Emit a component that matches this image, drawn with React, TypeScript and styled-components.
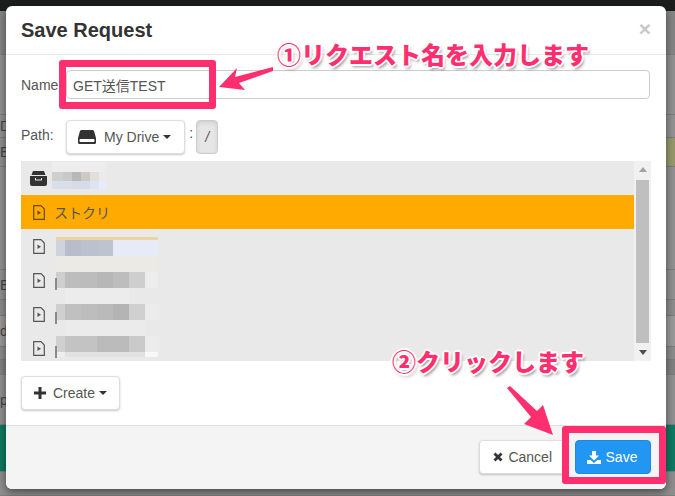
import React from "react";
import styled, { createGlobalStyle } from "styled-components";

const SANS = `"Liberation Sans", "Noto Sans CJK JP", sans-serif`;

const mosaic: { y: number; h: number; cells: [number, number, string][] }[] = [
  { y: 162, h: 10, cells: [[52, 54, "#ededed"]] },
  {
    y: 172,
    h: 9,
    cells: [
      [52, 11, "#cfcfcf"],
      [63, 9, "#c9c9c9"],
      [72, 9, "#b9b8b6"],
      [81, 9, "#cbcac8"],
      [90, 9, "#e0dfdc"],
      [99, 7, "#ecebe8"],
    ],
  },
  {
    y: 181,
    h: 8,
    cells: [
      [52, 20, "#d8deea"],
      [72, 18, "#d5dbe9"],
      [90, 9, "#dde4f3"],
      [99, 7, "#e6ecfb"],
    ],
  },
  { y: 237, h: 3, cells: [[56, 102, "#eed3a3"]] },
  {
    y: 240,
    h: 16,
    cells: [
      [56, 9, "#cfd3dd"],
      [65, 16, "#b9bdcb"],
      [81, 16, "#bcc1ce"],
      [97, 16, "#bec3d0"],
      [113, 45, "#e7ebf7"],
    ],
  },
  { y: 256, h: 16, cells: [[56, 102, "#ebeae5"]] },
  {
    y: 272,
    h: 16,
    cells: [
      [56, 9, "#cecece"],
      [65, 16, "#bdbdbd"],
      [81, 16, "#bcbcbc"],
      [97, 16, "#b7b7b7"],
      [113, 16, "#bdbdbd"],
      [129, 16, "#cecece"],
      [145, 13, "#ededed"],
    ],
  },
  { y: 288, h: 16, cells: [[65, 64, "#ececec"]] },
  {
    y: 304,
    h: 16,
    cells: [
      [56, 9, "#cfcfcf"],
      [65, 16, "#c0c0c0"],
      [81, 16, "#bdbdbd"],
      [97, 16, "#bababa"],
      [113, 16, "#b4b4b4"],
      [129, 16, "#d0d0d0"],
      [145, 13, "#ececec"],
    ],
  },
  { y: 320, h: 16, cells: [[65, 80, "#ebebeb"]] },
  {
    y: 336,
    h: 16,
    cells: [
      [56, 9, "#d0d0d0"],
      [65, 16, "#c3c3c3"],
      [81, 16, "#c3c3c3"],
      [97, 32, "#bbbbbb"],
      [129, 16, "#cacaca"],
      [145, 13, "#ececec"],
    ],
  },
  {
    y: 352,
    h: 5,
    cells: [
      [56, 9, "#eeeeee"],
      [65, 80, "#e2e2e2"],
      [145, 13, "#f8f8f8"],
    ],
  },
];

const files = ["ストクリ", "", "", "", ""];

const FileIcon = ({ color = "#555" }: { color?: string }) => (
  <svg width="12" height="15" viewBox="0 0 12 15">
    <path d="M.7.7H8L11.3 4V14.3H.7Z" fill="none" stroke={color} strokeWidth="1.2" />
    <path d="M4.5 5.5 8 7.8 4.5 10Z" fill={color} />
  </svg>
);

const App = () => (
  <>
    <GlobalStyle />
    <Page>
      <TopBar />
      <PageRow $h={44} $bg="#858585" />
      <PageRow $h={60} $bg="#919191" />
      <PageRow $h={23} $bg="#929292">
        <Fragment>D</Fragment>
      </PageRow>
      <PageRow $h={29} $bg="#8f8f8f" $right="#97996b">
        <Fragment>E</Fragment>
      </PageRow>
      <PageRow $h={103} $bg="#919191" />
      <PageRow $h={30} $bg="#919191">
        <Fragment>E</Fragment>
      </PageRow>
      <PageRow $h={16} $bg="#8c8c8c" />
      <PageRow $h={31} $bg="#9a9a9a">
        <Fragment>d</Fragment>
      </PageRow>
      <PageRow $h={13} $bg="#8c8c8c" />
      <PageRow $h={15} $bg="#828282" />
      <PageRow $h={50} $bg="#919191">
        <Fragment>p</Fragment>
      </PageRow>
      <PageRow $h={47} $bg="#0e7a63" />
      <PageRow $h={24} $bg="#8e8e8e" />
    </Page>

    <Modal>
      <Header>
        <Title>Save Request</Title>
        <Close>×</Close>
      </Header>
      <Body>
        <FieldRow>
          <Label>Name:</Label>
          <NameInput readOnly value="GET送信TEST" />
        </FieldRow>
        <PathRow>
          <Label>Path:</Label>
          <Button $pad="0 13px 0 11px">
            <svg width="18" height="14" viewBox="0 0 18 14">
              <path
                d="M3.5 0H14.5Q15.5 0 16 1L18 8V12.5Q18 14 16.5 14H1.5Q0 14 0 12.5V8L2 1Q2.5 0 3.5 0Z"
                fill="#333"
              />
              <rect x="1.5" y="9" width="15" height="3" rx="1" fill="#fff" />
            </svg>
            <ButtonText $left="8px">My Drive</ButtonText>
            <Caret />
          </Button>
          <Colon>:</Colon>
          <Crumb>/</Crumb>
        </PathRow>
        <ListBox>
          <Rows>
            <Row>
              <ArchiveIcon width="17" height="15" viewBox="0 0 17 15">
                <path d="M3 0H14L15.5 4H1.5Z" fill="#333" />
                <path
                  d="M0 5H17V13Q17 15 15 15H2Q0 15 0 13ZM5 7V9.5H12V7H11V8.5H6V7Z"
                  fill="#333"
                  fillRule="evenodd"
                />
              </ArchiveIcon>
            </Row>
            {files.map((name, i) => (
              <Row key={i} $active={name !== ""}>
                <FileIcon color={name ? "#6b4a00" : "#555"} />
                <RowName>{name}</RowName>
              </Row>
            ))}
          </Rows>
          <Scrollbar>
            <ScrollUp />
            <Thumb />
            <ScrollDown />
          </Scrollbar>
          <Mosaic viewBox="0 161 160 200" width="160" height="200" shapeRendering="crispEdges">
            {mosaic.flatMap((m) =>
              m.cells.map(([x, w, fill]) => (
                <rect key={`${m.y}-${x}`} x={x - 21} y={m.y} width={w} height={m.h} fill={fill} />
              )),
            )}
            {[278, 312, 346].map((y) => (
              <rect key={y} x={34} y={y} width={1.5} height={12} fill="#8a8a8a" />
            ))}
          </Mosaic>
        </ListBox>
        <CreateRow>
          <Button $pad="0 12px 0 12px">
            <svg width="12" height="12" viewBox="0 0 12 12">
              <path d="M4.5 0H7.500V4.5H12V7.5H7.5V12H4.5V7.5H0V4.5H4.5Z" fill="#333" />
            </svg>
            <ButtonText $left="7px">Create</ButtonText>
            <Caret />
          </Button>
        </CreateRow>
      </Body>
      <Footer>
        <Button $pad="0 12px 0 13px">
          <svg width="10" height="10" viewBox="0 0 10 10">
            <path d="M1.5 1.5 8.5 8.5M8.5 1.5 1.5 8.5" stroke="#333" strokeWidth="2.8" />
          </svg>
          <ButtonText $left="5px">Cancel</ButtonText>
        </Button>
        <SaveButton>
          <svg width="14" height="13" viewBox="0 0 14 13">
            <path d="M5 0H9V4.5H12L7 9.5 2 4.5H5Z" fill="#fff" />
            <path d="M0 9H3.5L7 12 10.500 9H14V13H0Z" fill="#fff" />
          </svg>
          <ButtonText $left="5px">Save</ButtonText>
        </SaveButton>
      </Footer>
    </Modal>

    <NameHighlight />
    <SaveHighlight />
    <NameNote>①リクエスト名を入力します</NameNote>
    <SaveNote>②クリックします</SaveNote>
    <Arrows viewBox="0 0 675 496" width="675" height="496">
      <g fill="#ff2f6f">
        <path d="M219 87 237 68 235 77 273 67 273 71 239 83 245 90Z" />
        <path d="M507 388 510 386 537 411 543 405 553 435 524 424 531 417Z" />
      </g>
    </Arrows>
  </>
);

export default App;

const GlobalStyle = createGlobalStyle`
  html, body {
    margin: 0;
    padding: 0;
    overflow: hidden;
    background: #8f8f8f;
  }
  * {
    box-sizing: border-box;
  }
`;

const Page = styled.div`
  display: flex;
  flex-direction: column;
  width: 675px;
  height: 496px;
  overflow: hidden;
  font-family: ${SANS};
`;

const TopBar = styled.div`
  flex: none;
  height: 11px;
  background-color: #1c1e1d;
`;

const PageRow = styled.div<{ $h: number; $bg: string; $right?: string }>`
  display: flex;
  align-items: center;
  flex: none;
  height: ${(p) => p.$h}px;
  background: ${(p) =>
    p.$right ? `linear-gradient(90deg, ${p.$bg} 600px, ${p.$right} 600px)` : p.$bg};
  border-bottom: 1px solid #7d7d7d;
`;

const Fragment = styled.span`
  font-size: 14px;
  color: #444;
`;

const Modal = styled.div`
  position: absolute;
  left: 6px;
  top: 6px;
  display: flex;
  flex-direction: column;
  width: 660px;
  height: 483px;
  background-color: #fff;
  border-radius: 6px;
  box-shadow: 0 3px 9px rgba(0, 0, 0, 0.5);
  overflow: hidden;
  font-family: ${SANS};
  font-size: 14px;
  color: #555;
`;

const Header = styled.div`
  display: flex;
  justify-content: space-between;
  align-items: center;
  height: 49px;
  padding: 0 15px;
  border-bottom: 1px solid #e9e9e9;
`;

const Title = styled.h4`
  margin: 0;
  padding-top: 1px;
  font-size: 20px;
  font-weight: 700;
  color: #333;
`;

const Close = styled.span`
  margin-top: -2px;
  font-size: 21px;
  font-weight: 700;
  color: #c8c8c8;
`;

const Body = styled.div`
  display: flex;
  flex-direction: column;
  flex: 1;
  padding: 15px;
`;

const FieldRow = styled.div`
  display: flex;
  align-items: center;
  height: 29px;
`;

const Label = styled.label`
  width: 45px;
  flex: none;
`;

const NameInput = styled.input`
  flex: 1;
  height: 29px;
  margin-right: 1px;
  padding: 0 6px;
  border: 1px solid #ccc;
  border-radius: 4px;
  outline: none;
  font-family: inherit;
  font-size: 14px;
  color: #555;
`;

const PathRow = styled.div`
  display: flex;
  align-items: flex-start;
  height: 34px;
  margin-top: 21px;

  ${Label} {
    margin-top: 7px;
  }
`;

const Button = styled.button<{ $pad: string }>`
  display: inline-flex;
  align-items: center;
  height: 34px;
  padding: ${(p) => p.$pad};
  background-color: #fff;
  border: 1px solid #ddd;
  border-radius: 4px;
  box-shadow: 0 1px 2px rgba(0, 0, 0, 0.22);
  font-family: inherit;
  font-size: 14px;
  color: #555;
`;

const ButtonText = styled.span<{ $left: string }>`
  margin-left: ${(p) => p.$left};
`;

const Caret = styled.span`
  margin-left: 4px;
  border-top: 4px solid #333;
  border-left: 4px solid transparent;
  border-right: 4px solid transparent;
`;

const Colon = styled.span`
  margin: 5px 0 0 4px;
  width: 7px;
`;

const Crumb = styled.span`
  display: flex;
  align-items: center;
  justify-content: center;
  width: 22px;
  height: 34px;
  background-color: #e6e6e6;
  border: 1px solid #ccc;
  border-radius: 4px;
  box-shadow: inset 0 2px 4px rgba(0, 0, 0, 0.1);
  font-style: italic;
`;

const ListBox = styled.div`
  position: relative;
  display: flex;
  height: 200px;
  margin-top: 7px;
  background-color: #e9e9e9;
  overflow: hidden;
`;

const Rows = styled.div`
  display: flex;
  flex-direction: column;
  width: 613px;
`;

const Row = styled.div<{ $active?: boolean }>`
  display: flex;
  align-items: center;
  flex: none;
  gap: 9px;
  height: 34px;
  padding-left: 12px;
  background-color: ${(p) => (p.$active ? "#ffaa00" : "transparent")};
  color: #555;
`;

const ArchiveIcon = styled.svg`
  margin-left: -3px;
`;

const RowName = styled.span`
  font-size: 14px;
`;

const Scrollbar = styled.div`
  display: flex;
  flex-direction: column;
  align-items: center;
  justify-content: space-between;
  width: 17px;
  background-color: #f1f1f1;
`;

const ScrollUp = styled.span`
  margin-top: 6px;
  border-bottom: 5px solid #a3a3a3;
  border-left: 4px solid transparent;
  border-right: 4px solid transparent;
`;

const ScrollDown = styled.span`
  margin-bottom: 6px;
  border-top: 5px solid #505050;
  border-left: 4px solid transparent;
  border-right: 4px solid transparent;
`;

const Thumb = styled.div`
  width: 13px;
  height: 163px;
  background-color: #bfbfbf;
`;

const Mosaic = styled.svg`
  position: absolute;
  left: 0;
  top: 0;
`;

const CreateRow = styled.div`
  display: flex;
  margin-top: 15px;
`;

const Footer = styled.div`
  display: flex;
  justify-content: flex-end;
  gap: 10px;
  height: 64px;
  padding: 14px 15px;
  background-color: #f4f4f4;
  border-top: 1px solid #dfdfdf;
`;

const SaveButton = styled.button`
  display: inline-flex;
  align-items: center;
  justify-content: center;
  width: 76px;
  height: 34px;
  padding: 0 2px 0 0;
  background-color: #2196f3;
  border: 1px solid #1e88e5;
  border-radius: 4px;
  font-family: inherit;
  font-size: 14px;
  color: #fff;
`;

const NameHighlight = styled.div`
  position: absolute;
  left: 59px;
  top: 60px;
  width: 157px;
  height: 49px;
  border: 7px solid #ff2f6f;
  border-radius: 3px;
`;

const SaveHighlight = styled.div`
  position: absolute;
  left: 562px;
  top: 426px;
  width: 104px;
  height: 58px;
  border: 7px solid #ff2f6f;
  border-radius: 3px;
`;

const Note = styled.div`
  position: absolute;
  font-family: "Noto Sans CJK JP", sans-serif;
  font-size: 24px;
  line-height: 30px;
  font-weight: 900;
  white-space: nowrap;
  color: #ff2f6f;
  text-shadow:
    -2px 0 0 #fff,
    2px 0 0 #fff,
    0 -2px 0 #fff,
    0 2px 0 #fff,
    -1px -1px 0 #fff,
    1px -1px 0 #fff,
    -1px 1px 0 #fff,
    1px 1px 0 #fff,
    2px 3px 3px rgba(0, 0, 0, 0.4);
`;

const NameNote = styled(Note)`
  left: 277px;
  top: 39px;
`;

const SaveNote = styled(Note)`
  left: 392px;
  top: 346px;
`;

const Arrows = styled.svg`
  position: absolute;
  left: 0;
  top: 0;
  pointer-events: none;
`;
